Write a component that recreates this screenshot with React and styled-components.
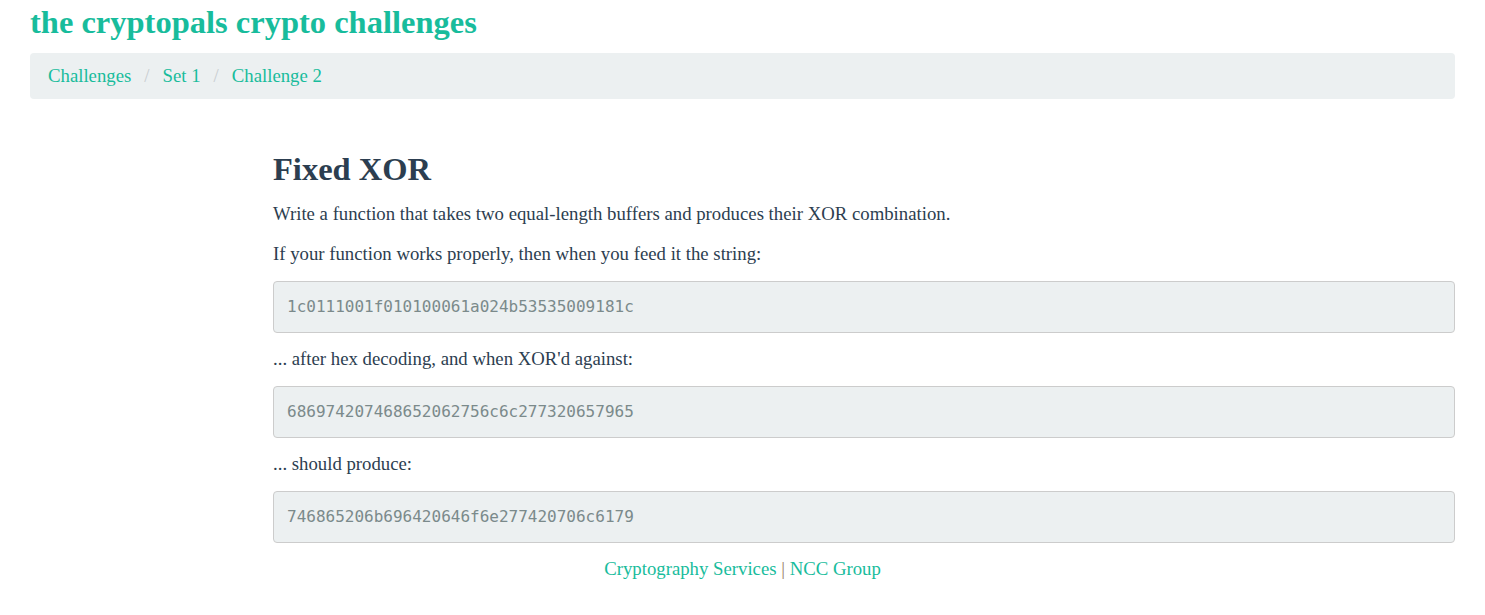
import React from 'react';
import styled, { createGlobalStyle } from 'styled-components';

const GlobalStyle = createGlobalStyle`
  body {
    margin: 0;
    background: #ffffff;
    font-family: "Liberation Serif", "Times New Roman", serif;
    color: #2c3e50;
  }
`;

const Page = styled.div`
  padding: 0 30px;
`;

const SiteTitle = styled.h1`
  margin: 0;
  padding-top: 3px;
  font-size: 32.5px;
  line-height: 38px;
  font-weight: bold;
  color: #18bc9c;
`;

const Breadcrumb = styled.ol`
  list-style: none;
  margin: 12px 0 0;
  padding: 0 18px;
  height: 46px;
  box-sizing: border-box;
  display: flex;
  align-items: center;
  background: #ecf0f1;
  border-radius: 4px;
  font-size: 18.75px;
`;

const Crumb = styled.li`
  display: flex;
  align-items: center;

  & + &::before {
    content: "/";
    color: #c8cdd0;
    padding: 0 13px;
  }

  a {
    color: #18bc9c;
    text-decoration: none;
  }
`;

const Content = styled.main`
  margin: 50px 0 0 243px;
`;

const Heading = styled.h2`
  margin: 0 0 12px;
  font-size: 32.5px;
  line-height: 40px;
  font-weight: bold;
  color: #2c3e50;
`;

const Para = styled.p`
  margin: 0 0 14px;
  font-size: 18.75px;
  line-height: 26px;
`;

const Code = styled.pre`
  margin: 0 0 13px;
  padding: 13px;
  font-family: "DejaVu Sans Mono", "Liberation Mono", monospace;
  font-size: 16px;
  line-height: 24px;
  color: #7b8a8b;
  background: #ecf0f1;
  border: 1px solid #cccccc;
  border-radius: 4px;
`;

const Footer = styled.footer`
  text-align: center;
  font-size: 18.75px;
  line-height: 26px;

  a {
    color: #18bc9c;
    text-decoration: none;
  }
`;

const Sep = styled.span`
  color: #9a7d68;
`;

const App = () => {
  return (
    <Page>
      <GlobalStyle />
      <SiteTitle>the cryptopals crypto challenges</SiteTitle>
      <Breadcrumb>
        <Crumb><a href="#">Challenges</a></Crumb>
        <Crumb><a href="#">Set 1</a></Crumb>
        <Crumb><a href="#">Challenge 2</a></Crumb>
      </Breadcrumb>
      <Content>
        <Heading>Fixed XOR</Heading>
        <Para>Write a function that takes two equal-length buffers and produces their XOR combination.</Para>
        <Para>If your function works properly, then when you feed it the string:</Para>
        <Code>1c0111001f010100061a024b53535009181c</Code>
        <Para>... after hex decoding, and when XOR'd against:</Para>
        <Code>686974207468652062756c6c277320657965</Code>
        <Para>... should produce:</Para>
        <Code>746865206b696420646f6e277420706c6179</Code>
      </Content>
      <Footer>
        <a href="#">Cryptography Services</a> <Sep>|</Sep> <a href="#">NCC Group</a>
      </Footer>
    </Page>
  );
};

export default App;
